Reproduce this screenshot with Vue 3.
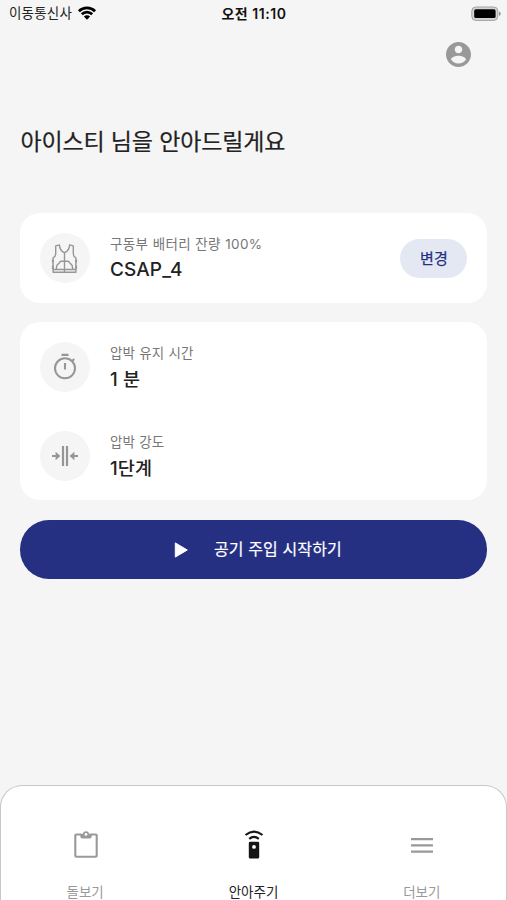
<script setup>
const settings = [
  { id: 'time', label: '압박 유지 시간', value: '1 분' },
  { id: 'level', label: '압박 강도', value: '1단계' },
]
</script>

<template>
  <div class="screen">
    <header class="status">
      <div class="carrier">
        <span>이동통신사</span>
        <svg class="wifi" viewBox="0 0 20 14">
          <path d="M1.9 5.200a11.600 11.600 0 0 1 16.200 0" />
          <path d="M4.800 8.200a7.400 7.400 0 0 1 10.400 0" />
          <path class="dot" d="M10 13.700 6.900 10.600a4.400 4.400 0 0 1 6.200 0z" />
        </svg>
      </div>
      <div class="clock">오전 11:10</div>
      <div class="power">
        <svg viewBox="0 0 30 16">
          <rect x=".8" y="1" width="26" height="13.4" rx="4" fill="#d4d4d4" stroke="#a2a2a2" />
          <rect x="3.2" y="3.3" width="21.4" height="8.8" rx="1.6" fill="#000" />
          <path d="M28 5.6c2.3 1 2.3 3.4 0 4.400z" fill="#929292" />
        </svg>
      </div>
    </header>

    <div class="profile">
      <svg viewBox="2 2 20 20">
        <path fill="#999" d="M12 2C6.48 2 2 6.48 2 12s4.48 10 10 10 10-4.48 10-10S17.52 2 12 2zm0 3c1.66 0 3 1.34 3 3s-1.34 3-3 3-3-1.34-3-3 1.34-3 3-3zm0 14.2a7.2 7.2 0 0 1-6-3.22c.03-1.99 4-3.08 6-3.08 1.99 0 5.97 1.09 6 3.08a7.2 7.2 0 0 1-6 3.22z" />
      </svg>
    </div>

    <h1>아이스티 님을 안아드릴게요</h1>

    <section class="card">
      <div class="row">
        <div class="badge">
          <svg class="vest" viewBox="0 0 29 31">
            <path d="M5.700 2.900 9.400 1.900C9.600 5.500 11.300 8.600 14.500 9.600 17.700 8.600 19.400 5.500 19.600 1.900L23.300 2.900V10.500C23.300 13 24.200 14 25.900 14.800V29.200H3.100V14.800C4.800 14 5.700 13 5.700 10.500Z" />
            <path d="M14.500 9.600V29M10.700 18.300h7.600l3.900 4.200 .6 4H6.200l.6-4zM3.100 26.500h3.100M25.900 26.500h-3.100" />
            <path class="strap" d="M2.700 16.500v3M2.700 22.500v3.500M26.300 16.500v3M26.300 22.500v3.500" />
          </svg>
        </div>
        <div class="info">
          <div class="label wide">구동부 배터리 잔량 100%</div>
          <div class="value device">CSAP_4</div>
        </div>
        <button class="change">변경</button>
      </div>
    </section>

    <section class="card settings">
      <div v-for="item in settings" :key="item.id" class="row">
        <div class="badge">
          <svg v-if="item.id === 'time'" class="timer" viewBox="0 0 26 28">
            <circle cx="13" cy="15.300" r="10" />
            <path d="M9.500 1.900h7M13 10v6.500M20 8.200l2.200-2.200" />
          </svg>
          <svg v-else class="squeeze" viewBox="0 0 26 20">
            <path d="M11 0v20M15 0v20" />
            <path d="M0 10h5M26 10h-5" />
            <path class="tip" d="M3.600 5.800 8.400 10 3.600 14.200zM22.400 5.800 17.600 10l4.800 4.200z" />
          </svg>
        </div>
        <div class="info">
          <div class="label">{{ item.label }}</div>
          <div class="value">{{ item.value }}</div>
        </div>
      </div>
    </section>

    <button class="start">
      <svg viewBox="0 0 14 16"><path d="M1.300.900v14.200L13.300 8z" fill="#fff" stroke="#fff" stroke-linejoin="round" /></svg>
      <span>공기 주입 시작하기</span>
    </button>

    <nav>
      <div class="tab">
        <svg viewBox="0 0 28 30">
          <path d="M9 4.500H4.300q-1 0-1 1v20.300q0 1 1 1h19.400q1 0 1-1V5.500q0-1-1-1H19" fill="none" stroke="#999" stroke-width="2.100" />
          <path fill="#999" fill-rule="evenodd" d="M8.300 3.800h2.500a3.300 3.300 0 0 1 6.400 0h2.500v2.700q0 2-2 2h-7.400q-2 0-2-2zM14 3a1.400 1.400 0 1 0 0 2.800 1.400 1.400 0 0 0 0-2.800z" />
        </svg>
        <span>돌보기</span>
      </div>
      <div class="tab active">
        <svg viewBox="0 0 28 30">
          <path d="M5.500 5q8.500-6.600 17 0M9.200 8.800q4.800-3.700 9.600 0" fill="none" stroke="#151515" stroke-width="2.200" />
          <path fill="#151515" fill-rule="evenodd" d="M10.200 11.800h7.600q1.400 0 1.400 1.400v14q0 1.400-1.400 1.400h-7.600q-1.400 0-1.400-1.400v-14q0-1.400 1.400-1.400zM14 15a1.900 1.900 0 1 0 0 3.800 1.900 1.900 0 0 0 0-3.800z" />
        </svg>
        <span>안아주기</span>
      </div>
      <div class="tab">
        <svg viewBox="0 0 28 30">
          <path d="M3 9.200h22M3 15.400h22M3 21.600h22" stroke="#999" stroke-width="2.200" />
        </svg>
        <span>더보기</span>
      </div>
    </nav>
  </div>
</template>

<style>
body {
  background: #f5f5f5;
}
</style>

<style scoped>
* {
  box-sizing: border-box;
}
.screen {
  height: 900px;
  overflow: hidden;
  display: flex;
  flex-direction: column;
  background: #f5f5f5;
  color: #222;
  font-family: Inter, "Noto Sans CJK KR", sans-serif;
}
svg {
  display: block;
  flex: none;
}
button {
  border: 0;
  padding: 0;
  font-family: inherit;
}
.status {
  height: 27px;
  flex: none;
  display: grid;
  grid-template-columns: 1fr auto 1fr;
  align-items: center;
  padding: 0 6px 0 9px;
  font-size: 13.5px;
  line-height: 27px;
}
.carrier {
  display: flex;
  align-items: center;
  gap: 5px;
}
.carrier span {
  letter-spacing: 0.2px;
}
.wifi {
  width: 20px;
  height: 14px;
  margin-bottom: 1px;
  fill: none;
  stroke: #000;
  stroke-width: 2.7;
}
.wifi .dot {
  fill: #000;
  stroke: none;
}
.clock {
  margin-right: 2px;
  color: #111;
  font-weight: 600;
  font-size: 14px;
  letter-spacing: 0.55px;
}
.power {
  display: flex;
  justify-content: flex-end;
}
.power svg {
  width: 30px;
  height: 16px;
}
.profile {
  flex: none;
  display: flex;
  justify-content: flex-end;
  padding: 15px 36.5px 0 0;
  height: 53px;
}
.profile svg {
  width: 25px;
  height: 25px;
}
h1 {
  flex: none;
  margin: 45px 0 0 20.5px;
  height: 34px;
  line-height: 34px;
  font-size: 23px;
  font-weight: 400;
  letter-spacing: -0.15px;
  -webkit-text-stroke: 0.2px #222;
  white-space: nowrap;
}
.card {
  flex: none;
  margin: 54px 19.6px 0 20.4px;
  background: #fff;
  border-radius: 20px;
}
.settings {
  margin-top: 19px;
}
.row {
  height: 90px;
  display: flex;
  align-items: center;
  padding: 0 20px 0 19.6px;
}
.settings .row {
  height: 89px;
}
.badge {
  width: 50px;
  height: 50px;
  border-radius: 50%;
  background: #f5f5f5;
  display: grid;
  place-items: center;
}
.badge svg {
  fill: none;
  stroke: #969696;
}
.vest {
  width: 29px;
  height: 31px;
  stroke-width: 1.4;
  stroke-linejoin: round;
}
.vest .strap {
  stroke-width: 1.6;
}
.timer {
  width: 26px;
  height: 28px;
  stroke-width: 2.1;
}
.squeeze {
  width: 26px;
  height: 20px;
  stroke-width: 2.2;
}
.squeeze .tip {
  fill: #969696;
  stroke: none;
}
.info {
  flex: 1;
  margin-left: 20px;
  white-space: nowrap;
}
.label {
  font-size: 13.5px;
  height: 24px;
  line-height: 22px;
  color: #777;
  letter-spacing: 0.2px;
}
.wide {
  letter-spacing: 0.4px;
}
.value {
  font-size: 18.5px;
  height: 26px;
  line-height: 26px;
  font-weight: 500;
  letter-spacing: 0.2px;
}
.device {
  font-size: 19px;
  letter-spacing: 0.1px;
}
.change {
  width: 67px;
  height: 39px;
  padding-bottom: 2px;
  border-radius: 20px;
  background: #e4e8f3;
  color: #253083;
  font-size: 15px;
  font-weight: 400;
  -webkit-text-stroke: 0.25px #253083;
}
.start {
  flex: none;
  margin: 20px 19.6px 0 20.4px;
  height: 59px;
  border-radius: 29px;
  background: #253083;
  color: #fff;
  font-size: 16px;
  font-weight: 400;
  letter-spacing: 0.1px;
  -webkit-text-stroke: 0.2px #fff;
  display: flex;
  align-items: center;
  justify-content: center;
  gap: 26px;
  padding: 0 0 4px 8px;
}
.start svg {
  width: 14px;
  height: 16px;
  margin-top: 4px;
}
nav {
  flex: none;
  margin-top: auto;
  height: 115px;
  border: 1.5px solid #c8c8c8;
  border-bottom: 0;
  border-radius: 22px 22px 0 0;
  background: #fff;
  display: grid;
  grid-template-columns: repeat(3, 1fr);
}
.tab {
  display: flex;
  flex-direction: column;
  align-items: center;
  padding: 44px 0 0;
  gap: 20px;
  color: #999;
  font-size: 13.5px;
  line-height: 24px;
}
.tab svg {
  width: 28px;
  height: 30px;
  margin-left: 1px;
}
.active {
  color: #222;
}
</style>
